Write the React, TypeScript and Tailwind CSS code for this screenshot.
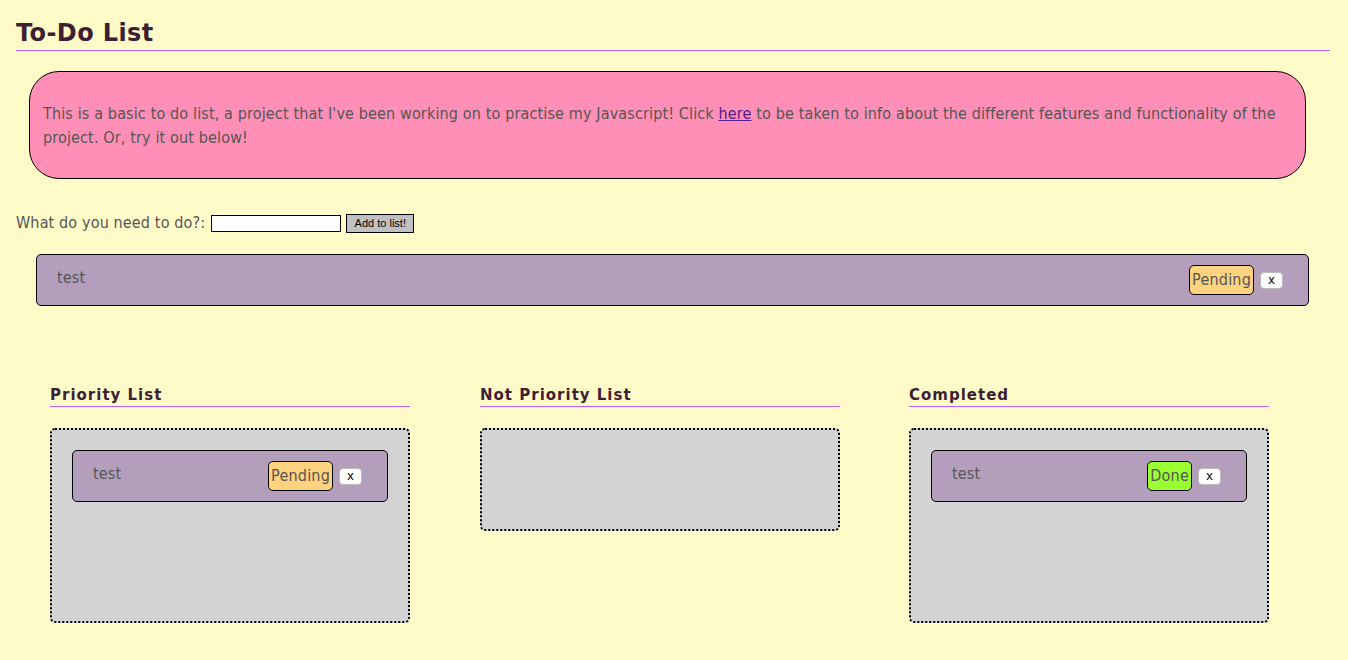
import React from "react";

const font = { fontFamily: '"DejaVu Sans Condensed", "DejaVu Sans", Verdana, sans-serif' };
const wide = { fontFamily: '"DejaVu Sans", Verdana, sans-serif' };

function Item({ status }: { status: "Pending" | "Done" }) {
  return (
    <div className="flex h-[52px] items-start rounded-[5px] border border-black bg-[#b39fbb] pl-[20px] pr-[25px]">
      <span className="mt-[13px] text-[16px] leading-[20px] tracking-[0.14px] text-[#555]">test</span>
      <div className="ml-auto mt-[10px] flex items-center gap-[6px]">
        <button
          className={`h-[30px] rounded-[5px] border border-black px-[2px] text-[16px] leading-[20px] tracking-[0.2px] text-[#555] ${
            status === "Done" ? "bg-[#99ff33]" : "bg-[#ffd27f]"
          }`}
          style={font}
        >
          {status}
        </button>
        <button
          className="h-[17px] w-[23px] rounded-[4px] border border-[#bbb] bg-white text-[13px] leading-[14px] text-black"
          style={{ fontFamily: '"Liberation Sans", Arial, sans-serif' }}
        >
          x
        </button>
      </div>
    </div>
  );
}

function Column({ title, children, h, cls }: { title: string; children?: React.ReactNode; h: string; cls: string }) {
  return (
    <div className={`w-[360px] ${cls}`}>
      <h2
        className="border-b border-b-[#bf5fff] pb-[1px] text-[15px] font-bold leading-[20px] tracking-[1px] text-[#3d1f33]"
        style={wide}
      >
        {title}
      </h2>
      <div className={`mt-[21px] rounded-[5px] border-2 border-dotted border-black bg-[#d3d3d3] px-[20px] pt-[20px] ${h}`}>
        {children}
      </div>
    </div>
  );
}

export default function App() {
  return (
    <div className="min-h-screen bg-[#fffbc8] pb-[36px] pl-[16px] pr-[18px] pt-[18px] text-[#555]" style={font}>
      <h1 className="pb-[2px] text-[24px] font-bold leading-[30px] tracking-[0.4px] text-[#3d1f33]" style={wide}>
        To-Do List
      </h1>
      <div className="h-px bg-[#bf5fff]" />
      <div className="ml-[13px] mr-[24px] mt-[20px] rounded-[30px] border border-black bg-[#ff8fb6] pb-[28px] pl-[13px] pr-[13px] pt-[30px] text-[16px] leading-[24px] tracking-[0.14px] text-[#555]">
        This is a basic to do list, a project that I've been working on to practise my Javascript! Click{" "}
        <a className="text-[#551a8b] underline">here</a> to be taken to info about the different features and
        functionality of the project. Or, try it out below!
      </div>
      <div className="mt-[34px] flex items-center text-[16px] leading-[20px] tracking-[0.14px]">
        <span>What do you need to do?:</span>
        <input className="ml-[6px] h-[17px] w-[130px] border border-black bg-white" />
        <button
          className="ml-[5px] h-[19px] w-[68px] border border-black bg-[#c0c0c0] text-[11px] leading-[13px] tracking-normal text-black"
          style={{ fontFamily: '"Liberation Sans", Arial, sans-serif' }}
        >
          Add to list!
        </button>
      </div>
      <div className="ml-[20px] mr-[21px] mt-[21px]">
        <Item status="Pending" />
      </div>
      <div className="mt-[79px] flex pl-[34px]">
        <Column title="Priority List" h="h-[195px]" cls="">
          <Item status="Pending" />
        </Column>
        <Column title="Not Priority List" h="h-[103px]" cls="ml-[70px]" />
        <Column title="Completed" h="h-[195px]" cls="ml-[69px]">
          <Item status="Done" />
        </Column>
      </div>
    </div>
  );
}
